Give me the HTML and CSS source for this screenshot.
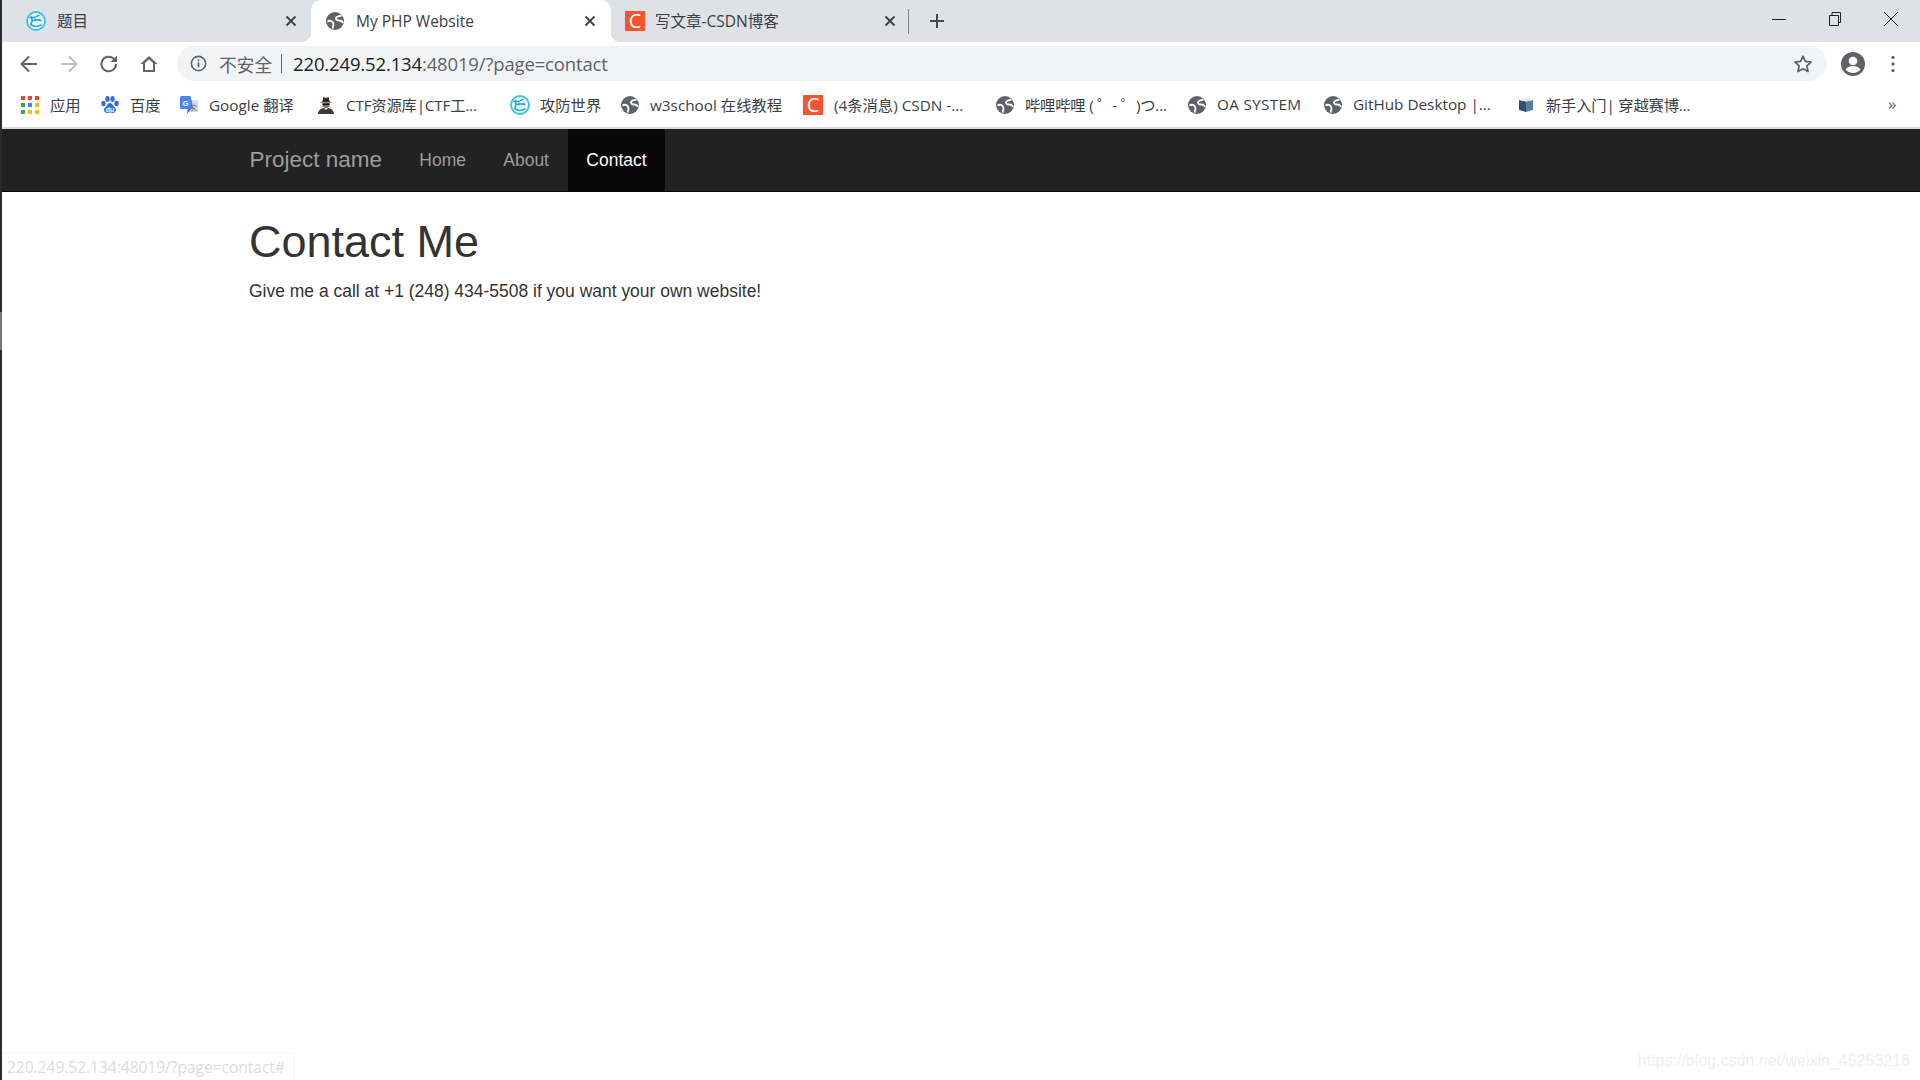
FILE: index.html
```html
<!DOCTYPE html>
<html lang="zh-CN">
<head>
    <meta charset="UTF-8">
    <meta name="viewport" content="width=device-width, initial-scale=1.0">
    <title>My PHP Website</title>
    <link rel="stylesheet" href="styles.css">
</head>
<body>
    <svg class="icon-defs" aria-hidden="true">
        <symbol id="globe" viewBox="0 0 18 18">
            <circle cx="9" cy="9" r="9" fill="#5f6368"/>
            <path d="M1.500 9.500c2.500-1.500 4.500-.5 5.500 1.200s.5 3.500-.5 5.800" fill="none" stroke="#fff" stroke-width="1.800"/>
            <path d="M15.500 3.500c-2 1-4 .5-5.200 2s.7 3 2.700 3 3.500 1 4 2.500" fill="none" stroke="#fff" stroke-width="1.800"/>
        </symbol>
        <symbol id="swirl" viewBox="0 0 20 20">
            <circle cx="10" cy="10" r="9" fill="#eaf8fd" stroke="#3cc0e8" stroke-width="1.800"/>
            <path d="M4 6.500c3 .5 6-.3 9-2.200M5.500 5.500c1 3 .5 6-.8 8.200M6 10c3-1.200 6-1.200 9-.4M5.500 14c3 1.800 6.500 1.800 9.500-.2M9 8c1 .8 3 1.500 5 .5" fill="none" stroke="#22a7d6" stroke-width="1.500" stroke-linecap="round"/>
        </symbol>
        <symbol id="close" viewBox="0 0 12 12">
            <path d="M1.500 1.500l9 9M10.500 1.500l-9 9" fill="none" stroke="#3c4043" stroke-width="1.900"/>
        </symbol>
    </svg>

    <div class="window">
        <div class="tab-strip">
            <div class="tab tab-first">
                <svg class="favicon swirl-icon"><use href="#swirl"/></svg>
                <span class="tab-title">题目</span>
                <svg class="tab-close"><use href="#close"/></svg>
            </div>
            <div class="tab tab-active">
                <svg class="favicon"><use href="#globe"/></svg>
                <span class="tab-title">My PHP Website</span>
                <svg class="tab-close"><use href="#close"/></svg>
            </div>
            <div class="tab">
                <span class="csdn-logo">C</span>
                <span class="tab-title tab-title-csdn">写文章-CSDN博客</span>
                <svg class="tab-close"><use href="#close"/></svg>
            </div>
            <div class="tab-sep"></div>
            <svg class="new-tab" viewBox="0 0 16 16">
                <path d="M8 1v14M1 8h14" fill="none" stroke="#45484d" stroke-width="2"/>
            </svg>
            <div class="window-controls">
                <svg class="win-btn" viewBox="0 0 16 16"><path d="M1 8.500h14" stroke="#222" fill="none"/></svg>
                <svg class="win-btn" viewBox="0 0 16 16"><path d="M2.500 4.500h9v10h-9zM5 4.500v-3h8.500v10h-2" stroke="#222" fill="none"/></svg>
                <svg class="win-btn" viewBox="0 0 16 16"><path d="M1 1l14 14M15 1L1 15" stroke="#222" fill="none"/></svg>
            </div>
        </div>

        <div class="toolbar">
            <svg class="tool-btn" viewBox="0 0 24 24"><path d="M20 12H5M12 4.500L4.500 12l7.500 7.500" fill="none" stroke="#5f6368" stroke-width="2"/></svg>
            <svg class="tool-btn" viewBox="0 0 24 24"><path d="M4 12h15M12 4.500l7.500 7.500-7.500 7.500" fill="none" stroke="#bdc1c6" stroke-width="2"/></svg>
            <svg class="tool-btn" viewBox="0 0 24 24"><path d="M19 12a7.300 7.300 0 1 1-2.200-5.200" fill="none" stroke="#5f6368" stroke-width="2"/><path d="M20 3.500V10h-6.500z" fill="#5f6368"/></svg>
            <svg class="tool-btn" viewBox="0 0 24 24"><path d="M12 4L3.500 12H6v8h12v-8h2.500zM8 18v-7l4-3.800 4 3.800v7z" fill="#5f6368"/></svg>
            <div class="address-bar">
                <svg class="info-icon" viewBox="0 0 16 16"><circle cx="8" cy="8" r="6.700" fill="none" stroke="#5f6368" stroke-width="1.500"/><path d="M8 7v4.500M8 4.300v1.500" stroke="#5f6368" stroke-width="1.600" fill="none"/></svg>
                <span class="not-secure">不安全</span>
                <span class="addr-sep"></span>
                <span class="url"><span class="url-host">220.249.52.134</span>:48019/?page=contact</span>
                <svg class="star-icon" viewBox="0 0 24 24"><path d="M12 3.500l2.600 5.700 6.200.7-4.600 4.200 1.300 6.100L12 17.100l-5.500 3.100 1.300-6.100-4.600-4.200 6.200-.7z" fill="none" stroke="#5f6368" stroke-width="1.900" stroke-linejoin="round"/></svg>
            </div>
            <svg class="avatar" viewBox="0 0 24 24"><circle cx="12" cy="12" r="12" fill="#5f6368"/><circle cx="12" cy="9" r="4.300" fill="#fff"/><path d="M4.500 17.500c2-2.800 4.800-3.500 7.500-3.500s5.500.7 7.500 3.500a9.700 9.700 0 0 1-15 0z" fill="#fff"/></svg>
            <svg class="menu-dots" viewBox="0 0 6 22"><circle cx="3" cy="3" r="2" fill="#5f6368"/><circle cx="3" cy="11" r="2" fill="#5f6368"/><circle cx="3" cy="19" r="2" fill="#5f6368"/></svg>
        </div>

        <div class="bookmarks">
            <div class="bookmark">
                <svg class="favicon" viewBox="0 0 18 18">
                    <rect x="0" y="0" width="4" height="4" fill="#ea4335"/><rect x="7" y="0" width="4" height="4" fill="#ea4335"/><rect x="14" y="0" width="4" height="4" fill="#ea4335"/>
                    <rect x="0" y="7" width="4" height="4" fill="#34a853"/><rect x="7" y="7" width="4" height="4" fill="#4285f4"/><rect x="14" y="7" width="4" height="4" fill="#fbbc05"/>
                    <rect x="0" y="14" width="4" height="4" fill="#34a853"/><rect x="7" y="14" width="4" height="4" fill="#fbbc05"/><rect x="14" y="14" width="4" height="4" fill="#fbbc05"/>
                </svg>
                <span>应用</span>
            </div>
            <div class="bookmark">
                <svg class="favicon" viewBox="0 0 18 18">
                    <ellipse cx="2.500" cy="7.500" rx="2.200" ry="2.800" fill="#2f6fe0"/><ellipse cx="6.500" cy="3" rx="2.200" ry="2.900" fill="#2f6fe0"/><ellipse cx="11.500" cy="3" rx="2.200" ry="2.900" fill="#2f6fe0"/><ellipse cx="15.500" cy="7.500" rx="2.200" ry="2.800" fill="#2f6fe0"/>
                    <path d="M9 7c-2.500 0-3 3-5 4.500-1.800 1.500-1 5.500 2 5.500 1.200 0 2-.4 3-.4s1.800.4 3 .4c3 0 3.800-4 2-5.500-2-1.500-2.500-4.500-5-4.500z" fill="#2f6fe0"/>
                    <text x="9" y="15.500" class="du-text">du</text>
                </svg>
                <span>百度</span>
            </div>
            <div class="bookmark">
                <svg class="favicon" viewBox="0 0 18 18">
                    <rect x="7" y="4" width="11" height="12" rx="1" fill="#dcdcdc"/>
                    <path d="M1.500 0h9l3 13H1.500A1.500 1.500 0 0 1 0 11.500v-10A1.500 1.500 0 0 1 1.500 0z" fill="#4a86e8"/>
                    <path d="M8 13l-1 5 4-5z" fill="#3a5fb0"/>
                    <text x="5.500" y="9.500" class="g-text">G</text>
                    <text x="14" y="13.500" class="wen-text">文</text>
                </svg>
                <span>Google 翻译</span>
            </div>
            <div class="bookmark">
                <svg class="favicon" viewBox="0 0 18 18">
                    <path d="M2.500 6.500h13l-2.900-1-1-4.500-2.600 1-2.600-1-1 4.500z" fill="#2a2a2a"/>
                    <path d="M5.500 7h7v3.500L9 12.500 5.500 10.500z" fill="#8a6a50"/>
                    <rect x="5.500" y="7.500" width="7" height="1.500" fill="#111"/>
                    <path d="M1 18c0-4 3.500-5.500 6-6l2 2 2-2c2.500.5 6 2 6 6z" fill="#3a3a3a"/>
                </svg>
                <span class="tight">CTF资源库|CTF工...</span>
            </div>
            <div class="bookmark">
                <svg class="favicon swirl-icon"><use href="#swirl"/></svg>
                <span>攻防世界</span>
            </div>
            <div class="bookmark">
                <svg class="favicon"><use href="#globe"/></svg>
                <span>w3school 在线教程</span>
            </div>
            <div class="bookmark">
                <span class="csdn-logo">C</span>
                <span>(4条消息) CSDN -...</span>
            </div>
            <div class="bookmark">
                <svg class="favicon"><use href="#globe"/></svg>
                <span class="tight">哔哩哔哩 ( ゜- ゜)つ...</span>
            </div>
            <div class="bookmark">
                <svg class="favicon"><use href="#globe"/></svg>
                <span class="wide">OA SYSTEM</span>
            </div>
            <div class="bookmark">
                <svg class="favicon"><use href="#globe"/></svg>
                <span>GitHub Desktop |...</span>
            </div>
            <div class="bookmark">
                <svg class="favicon" viewBox="0 0 18 18">
                    <path d="M2 4l7 1.500V16l-7-2z" fill="#35506e"/>
                    <path d="M16 4L9 5.500V16l7-2z" fill="#5a7ea3"/>
                    <path d="M2 4l7-1.500L16 4 9 5.500z" fill="#dfe6ee"/>
                </svg>
                <span class="tight">新手入门| 穿越赛博...</span>
            </div>
            <span class="more-bookmarks">»</span>
        </div>

        <nav class="navbar">
            <a class="brand" href="#">Project name</a>
            <a class="nav-link" href="#">Home</a>
            <a class="nav-link" href="#">About</a>
            <a class="nav-link nav-active" href="#">Contact</a>
        </nav>

        <main class="content">
            <h1>Contact Me</h1>
            <p>Give me a call at +1 (248) 434-5508 if you want your own website!</p>
        </main>

        <footer class="bottom-row">
            <div class="status-bubble">220.249.52.134:48019/?page=contact#</div>
            <div class="watermark">https://blog.csdn.net/weixin_45253216</div>
        </footer>
    </div>
</body>
</html>
```

FILE: styles.css
```css
* {
    box-sizing: border-box;
}
html, body {
    margin: 0;
    padding: 0;
}
body {
    height: 1080px;
    overflow: hidden;
    background: linear-gradient(#2b2b2b 312px, #777 312px, #777 350px, #2b2b2b 350px);
    font-family: "Open Sans", "Noto Sans CJK SC", sans-serif;
}
.icon-defs {
    display: none;
}
.window {
    display: flex;
    flex-direction: column;
    height: 1080px;
    margin-left: 2px;
    background: #fff;
}

/* tabs */
.tab-strip {
    display: flex;
    align-items: center;
    height: 42px;
    background: #dee1e6;
    flex-shrink: 0;
}
.tab {
    display: flex;
    align-items: center;
    align-self: stretch;
    position: relative;
    width: 300px;
    padding: 0 15px 1px 15px;
    font-size: 15.5px;
    color: #3c4043;
}
.tab-first {
    width: 309px;
    padding-left: 25px;
    padding-right: 14px;
}
.tab-active {
    background: #fff;
    border-radius: 10px 10px 0 0;
}
.tab-active::before, .tab-active::after {
    content: "";
    position: absolute;
    bottom: 0;
    width: 10px;
    height: 10px;
}
.tab-active::before {
    left: -10px;
    background: radial-gradient(circle at 0 0, transparent 10px, #fff 10.5px);
}
.tab-active::after {
    right: -10px;
    background: radial-gradient(circle at 100% 0, transparent 10px, #fff 10.5px);
}
.favicon {
    width: 18px;
    height: 18px;
    flex-shrink: 0;
}
.swirl-icon {
    width: 20px;
    height: 20px;
    margin-left: -1px;
    margin-right: -1px;
}
.tab-title {
    margin-left: 12px;
    flex: 1;
}
.tab-title-csdn {
    margin-left: 10px;
}
.tab-close {
    width: 12px;
    height: 12px;
}
.csdn-logo {
    display: flex;
    align-items: center;
    justify-content: center;
    width: 20px;
    height: 20px;
    flex-shrink: 0;
    background: #f4552f;
    color: #fff;
    font-size: 20px;
    line-height: 1;
}
.tab .csdn-logo {
    margin-left: -1px;
}
.tab-sep {
    width: 1px;
    height: 25px;
    margin-left: -3px;
    background: #80868b;
}
.new-tab {
    width: 16px;
    height: 16px;
    margin-left: 20px;
}
.window-controls {
    display: flex;
    align-items: center;
    gap: 40px;
    margin-left: auto;
    margin-right: 21px;
}
.win-btn {
    width: 16px;
    height: 16px;
    margin-top: -5px;
}

/* toolbar */
.toolbar {
    display: flex;
    align-items: center;
    height: 43px;
    padding-left: 15px;
    background: #fff;
    flex-shrink: 0;
}
.tool-btn {
    width: 24px;
    height: 24px;
    margin-right: 16px;
}
.address-bar {
    display: flex;
    align-items: center;
    width: 1650px;
    height: 35px;
    padding: 0 13px;
    background: #f1f3f4;
    border-radius: 18px;
    font-size: 18.5px;
    color: #5f6368;
}
.info-icon {
    width: 17px;
    height: 17px;
}
.not-secure {
    margin-left: 12px;
    font-size: 17.7px;
}
.addr-sep {
    width: 1px;
    height: 19px;
    margin: 0 11px 0 9px;
    background: #5f6368;
}
.url {
    letter-spacing: -0.15px;
}
.url-host {
    color: #202124;
}
.star-icon {
    width: 22px;
    height: 22px;
    margin-left: auto;
}
.avatar {
    width: 24px;
    height: 24px;
    margin-left: 14px;
}
.menu-dots {
    width: 6px;
    height: 18px;
    margin-left: 25px;
}

/* bookmarks */
.bookmarks {
    display: grid;
    grid-template-columns: 80px 79px 137px 194px 110px 182px 193px 192px 136px 193px 372px 1fr;
    align-items: center;
    height: 42px;
    padding: 0 0 2px 19px;
    background: #fff;
    font-size: 15.3px;
    color: #3c4043;
    flex-shrink: 0;
}
.bookmark {
    display: flex;
    align-items: center;
    gap: 11px;
    white-space: nowrap;
}
.bookmark span {
    padding-bottom: 2px;
}
.bookmark .csdn-logo {
    padding-bottom: 0;
}
.tight {
    letter-spacing: -0.2px;
}
.wide {
    letter-spacing: 0.3px;
}
.du-text {
    font: bold 7px "Liberation Sans", sans-serif;
    fill: #fff;
    text-anchor: middle;
}
.g-text {
    font: bold 8px "Liberation Sans", sans-serif;
    fill: #fff;
    text-anchor: middle;
}
.wen-text {
    font: 7px "Noto Sans CJK SC", sans-serif;
    fill: #777;
    text-anchor: middle;
}
.more-bookmarks {
    font-size: 17px;
    color: #5f6368;
    line-height: 1;
    margin-top: -4px;
    margin-left: -1px;
}

/* page */
.navbar {
    display: flex;
    height: 65px;
    padding-left: 229px;
    background: #222;
    border-top: 2px solid #d9d9e0;
    border-bottom: 1px solid #080808;
    font-family: "Liberation Sans", Arial, sans-serif;
    flex-shrink: 0;
}
.brand, .nav-link {
    display: flex;
    align-items: center;
    padding: 0 18.7px;
    color: #9d9d9d;
    text-decoration: none;
    font-size: 17.48px;
}
.brand {
    padding-left: 18.4px;
    font-size: 22.5px;
}
.nav-active {
    background: #080808;
    color: #fff;
}
.content {
    flex: 1;
    padding-left: 247px;
    font-family: "Liberation Sans", Arial, sans-serif;
    color: #333;
}
h1 {
    margin: 25px 0 12px;
    font-size: 45px;
    font-weight: 500;
    line-height: 1.1;
}
p {
    margin: 0;
    font-size: 17.48px;
    line-height: 1.43;
}
.bottom-row {
    display: flex;
    justify-content: space-between;
    align-items: flex-end;
    height: 28px;
    flex-shrink: 0;
}
.status-bubble {
    width: 293px;
    height: 28px;
    padding-left: 5px;
    border: 1px solid #f4f4f4;
    border-left: 0;
    border-bottom: 0;
    border-radius: 0 4px 0 0;
    font-size: 15.5px;
    line-height: 28px;
    color: #dcdcdc;
    white-space: nowrap;
}
.watermark {
    align-self: flex-start;
    margin-right: 10px;
    font-family: "Liberation Sans", Arial, sans-serif;
    font-size: 16px;
    color: #efefef;
}
```
